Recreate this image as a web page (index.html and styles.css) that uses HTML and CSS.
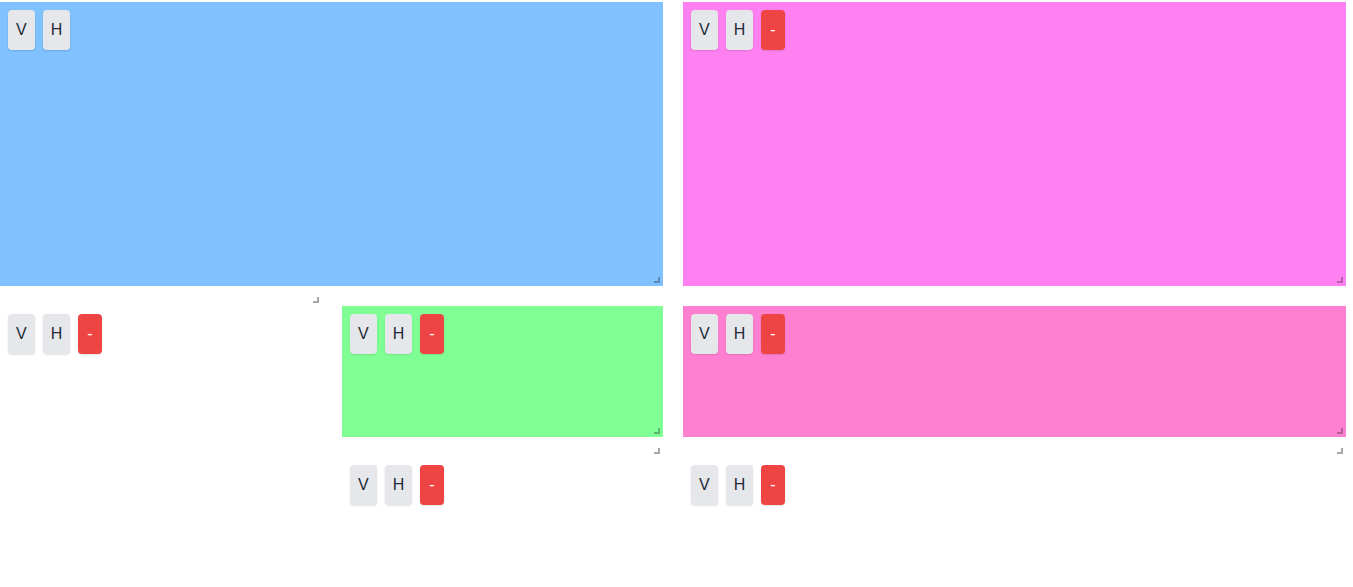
FILE: index.html
```html
<!DOCTYPE html>
<html>
<head>
<meta charset="utf-8">
<link rel="stylesheet" href="styles.css">
</head>
<body>
<div class="root">
  <div class="col">
    <div class="pane tall blue">
      <div class="tools"><button class="btn">V</button><button class="btn">H</button></div>
    </div>
    <div class="row">
      <div class="pane side white has-head">
        <div class="tools"><button class="btn">V</button><button class="btn">H</button><button class="btn del">-</button></div>
      </div>
      <div class="col sub">
        <div class="pane mid green has-tail">
          <div class="tools"><button class="btn">V</button><button class="btn">H</button><button class="btn del">-</button></div>
        </div>
        <div class="pane white plain">
          <div class="tools"><button class="btn">V</button><button class="btn">H</button><button class="btn del">-</button></div>
        </div>
      </div>
    </div>
  </div>
  <div class="col">
    <div class="pane tall pink">
      <div class="tools"><button class="btn">V</button><button class="btn">H</button><button class="btn del">-</button></div>
    </div>
    <div class="pane mid rose has-tail">
      <div class="tools"><button class="btn">V</button><button class="btn">H</button><button class="btn del">-</button></div>
    </div>
    <div class="pane white plain">
      <div class="tools"><button class="btn">V</button><button class="btn">H</button><button class="btn del">-</button></div>
    </div>
  </div>
</div>
</body>
</html>
```
FILE: styles.css
```css
html, body {
  margin: 0;
  padding: 0;
  background: #ffffff;
  font-family: "Liberation Sans", Arial, sans-serif;
}
.root {
  display: flex;
  gap: 20px;
  padding: 2px 7px 0 0;
  height: 587px;
  box-sizing: border-box;
}
.col {
  flex: 1;
  display: flex;
  flex-direction: column;
  gap: 20px;
  min-width: 0;
}
.row {
  display: flex;
  gap: 20px;
  flex: 1;
}
.sub {
  flex: 1;
}
.pane {
  position: relative;
  padding: 8px;
  box-sizing: border-box;
}
.pane::after {
  content: "";
  position: absolute;
  right: 3px;
  bottom: 3px;
  width: 4px;
  height: 4px;
  border-right: 2px solid rgba(0, 0, 0, 0.28);
  border-bottom: 2px solid rgba(0, 0, 0, 0.28);
}
.pane.white::after,
.pane.plain::after {
  display: none;
}
.has-tail::before,
.has-head::before {
  content: "";
  position: absolute;
  right: 3px;
  width: 4px;
  height: 4px;
  border-right: 2px solid #a8a8a8;
  border-bottom: 2px solid #a8a8a8;
}
.has-tail::before {
  bottom: -17px;
}
.has-head::before {
  top: -9px;
}
.tall {
  height: 284px;
  flex: none;
}
.mid {
  height: 131px;
  flex: none;
}
.side {
  width: 322px;
  flex: none;
}
.plain {
  flex: 1;
}
.blue { background: #80c1ff; }
.pink { background: #ff80f0; }
.rose { background: #ff80d0; }
.green { background: #80ff95; }
.white { background: #ffffff; }
.tools {
  display: flex;
  gap: 8px;
}
.btn {
  font-family: "Liberation Sans", Arial, sans-serif;
  font-size: 16px;
  line-height: 24px;
  height: 40px;
  padding: 8px 8px;
  border: none;
  border-radius: 4px;
  background: #e5e7eb;
  color: #1f2937;
  box-shadow: 0 1px 2px rgba(0, 0, 0, 0.12);
  cursor: pointer;
}
.btn.del {
  background: #ef4444;
  color: #ffffff;
  padding: 8px 9px;
}
```
